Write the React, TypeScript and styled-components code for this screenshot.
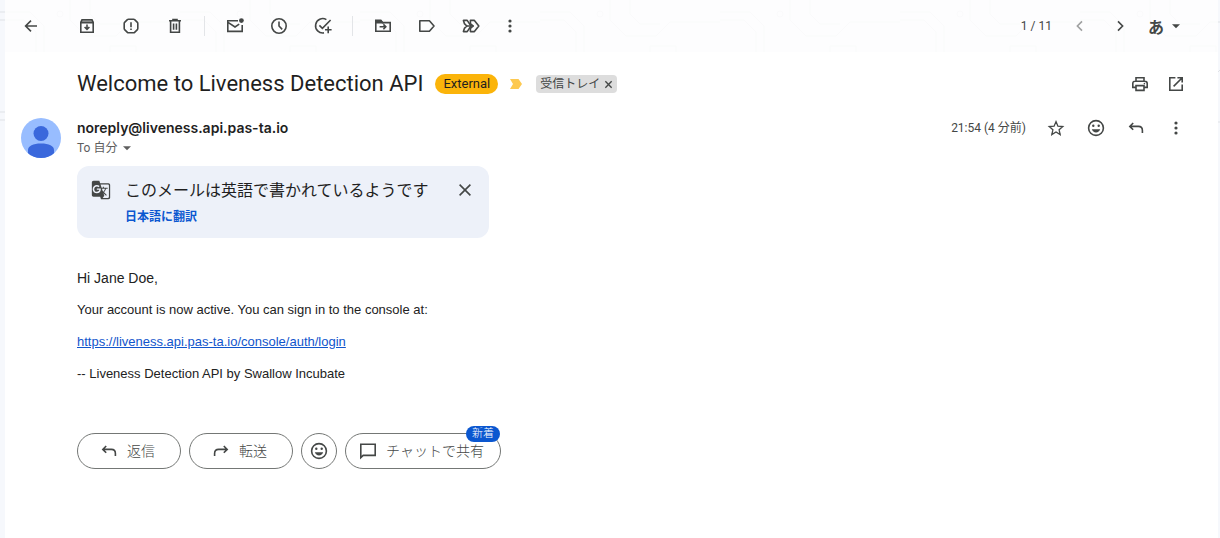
import React from "react";
import styled, { createGlobalStyle } from "styled-components";
import { MdGTranslate } from "react-icons/md";

const Global = createGlobalStyle`
  * { box-sizing: border-box; }
  body { margin: 0; background: #f6f8fc; font-family: Roboto, "Noto Sans CJK JP", sans-serif; color: #1f1f1f; }
  button { font: inherit; color: inherit; background: none; border: 0; padding: 0; margin: 0; cursor: pointer; }
`;

const paths = {
  back: <path d="M16 10H4.6M10 4.6L4.6 10l5.4 5.4" />,
  archive: (
    <>
      <path d="M3.8 6.6h12.4v9.6H3.8zM3.8 6.4l1.2-2.6h10l1.2 2.6" />
      <path d="M5 3.8h10l1 2.2H4z" fill="currentColor" fillOpacity=".5" stroke="none" />
      <path d="M10 8.4v4.4M7.6 11l2.4 2.4 2.4-2.4" />
    </>
  ),
  spam: (
    <>
      <path d="M7.4 3.2h5.2q.6 0 1 .4l2.8 2.8q.4.4.4 1v5.2q0 .6-.4 1l-2.8 2.8q-.4.4-1 .4H7.4q-.6 0-1-.4l-2.8-2.8q-.4-.4-.4-1V7.4q0-.6.4-1l2.8-2.8q.4-.4 1-.4z" />
      <path d="M10 6.2v5M10 12.4v1.7" />
    </>
  ),
  trash: <path d="M4 4.8h12M8 4V3.6h4V4M5.6 5v11.2h8.8V5M8.6 7.4v6.4M11.4 7.4v6.4" />,
  unread: (
    <>
      <path d="M13 4.8H2.8v10.6h14.4V9M3 6.4l7 4.6 4.2-2.8" />
      <circle cx="16.4" cy="4.6" r="2.4" fill="currentColor" stroke="none" />
    </>
  ),
  clock: (
    <>
      <circle cx="10" cy="10" r="7.2" />
      <path d="M10 5.4V10l3.2 3.4" />
    </>
  ),
  task: <path d="M13.4 3.6A7.2 7.2 0 1 0 11 16.9M6.4 9.4l3 3L17.6 4M15.2 10.6v6.6M12 13.8h6.6" />,
  move: (
    <>
      <path d="M2.8 4.8h5l1.6 1.8h7.8v8.6H2.8z" />
      <path d="M2.8 4.4h5l1.8 2.4H2.8z" fill="currentColor" />
      <path d="M6.6 10.8h6M10.4 8.4l2.4 2.4-2.4 2.4" />
    </>
  ),
  label: <path d="M2.8 4.8h9.6l4.6 5.2-4.6 5.2H2.8z" strokeLinejoin="round" />,
  forwardAll: (
    <g strokeLinejoin="round" strokeLinecap="round">
      <path d="M2.400 4.400h3.800L10 10l-3.800 5.600H2.400l1-3.200 2.400-2.400-2.400-2.400z" />
      <path d="M9.400 7.600V4.400h4L17.800 10l-4.400 5.600h-4v-3.200l2.800-2.400z" />
      <path d="M6 10h6" />
    </g>
  ),
  more: (
    <g fill="currentColor" stroke="none">
      <circle cx="10" cy="5" r="1.6" />
      <circle cx="10" cy="10" r="1.6" />
      <circle cx="10" cy="15" r="1.6" />
    </g>
  ),
  prev: <path d="M12 5.4L7.4 10l4.6 4.6" />,
  next: <path d="M8 5.4l4.6 4.6L8 14.6" />,
  caret: <path d="M6 8.2h8L10 12.2z" fill="currentColor" stroke="none" />,
  print: (
    <>
      <path d="M6 7V3.8h8V7M6 13.4H2.8V9.6c0-1.6.8-2.4 2.4-2.4h9.6c1.6 0 2.4.8 2.4 2.4v3.8H14" />
      <path d="M6 11.6h8v4.8H6z" />
      <circle cx="14.4" cy="9.6" r=".8" fill="currentColor" stroke="none" />
    </>
  ),
  open: <path d="M9.4 3.8H3.8v12.4h12.4v-5.6M11.4 3.8h4.8v4.8M16 4l-8.4 8.4" />,
  star: <path d="M10 3.6l1.9 4.6 4.9.4-3.7 3.2 1.1 4.8L10 14l-4.2 2.6 1.1-4.8-3.7-3.2 4.9-.4z" strokeWidth="1.3" />,
  smile: (
    <>
      <circle cx="10" cy="10" r="7.4" />
      <g fill="currentColor" stroke="none">
        <circle cx="7.3" cy="7.8" r="1.2" />
        <circle cx="12.7" cy="7.8" r="1.2" />
        <path d="M5.8 11.2h8.4c-.6 2-2.2 3.2-4.2 3.2s-3.6-1.2-4.2-3.2z" />
      </g>
    </>
  ),
  reply: <path d="M7.2 5L3.8 8.400l3.400 3.400M4 8.400h8.400c2.600 0 4 1.400 4 4v2.600" />,
  forward: <path d="M12.800 5l3.400 3.400-3.400 3.400M16 8.400H7.600c-2.600 0-4 1.400-4 4v2.600" />,
  close: <path d="M4.6 4.6l10.8 10.8M15.4 4.6L4.6 15.4" />,
  remove: <path d="M3 3l14 14M17 3L3 17" strokeWidth="3" />,
  chat: <path d="M2.8 3.2h14.4v11.2H5.2l-2.4 2.2z" />,
};

const Svg = styled.svg`
  display: block;
  flex: none;
  fill: none;
  stroke: currentColor;
  stroke-width: 1.6;
`;

const Icon = ({ name, size = 20 }: { name: keyof typeof paths; size?: number }) => (
  <Svg width={size} height={size} viewBox="0 0 20 20" aria-hidden="true">
    {paths[name]}
  </Svg>
);

const Page = styled.div`
  position: relative;
  min-height: 100vh;
  padding: 0 2px 0 5px;
`;

const Backdrop = styled.svg`
  position: absolute;
  inset: 0;
  width: 100%;
  height: 130px;
`;

const Sheet = styled.main`
  position: relative;
  min-height: 100vh;
  background: rgba(254, 254, 254, 0.86);
`;

const Toolbar = styled.header`
  display: flex;
  align-items: center;
  height: 52px;
  padding: 0 32px 0 16px;
  color: #444746;
`;

const ToolGroup = styled.div`
  display: flex;
  gap: 24px;
  padding-right: 19px;
  & + & {
    padding-left: 20px;
    border-left: 1px solid #e3e5e8;
  }
  &:last-of-type {
    padding-right: 20px;
  }
`;

const BackSlot = styled.div`
  margin-right: 36px;
`;

const IconButton = styled.button<{ $faded?: boolean }>`
  display: flex;
  align-items: center;
  justify-content: center;
  opacity: ${(p) => (p.$faded ? 0.5 : 1)};
`;

const Pager = styled.div`
  display: flex;
  align-items: center;
  gap: 18px;
  margin-left: auto;
  font-size: 12px;
`;

const PageArrows = styled.nav`
  display: flex;
  gap: 20px;
`;

const InputTool = styled.button`
  display: flex;
  align-items: center;
  gap: 2px;
  font: 700 16px/20px "Noto Sans CJK JP", sans-serif;
`;

const Content = styled.div`
  background: #fff;
  padding: 16px 32px 0 16px;
  min-height: calc(100vh - 52px);
`;

const SubjectRow = styled.div`
  display: flex;
  align-items: center;
  height: 32px;
  padding-left: 56px;
`;

const Subject = styled.h1`
  margin: 0 12px 0 0;
  font-size: 22px;
  line-height: 28px;
  font-weight: 400;
`;

const External = styled.span`
  padding: 0 8px;
  border-radius: 10px;
  background: #fbb40a;
  font-size: 13px;
  line-height: 20px;
`;

const Marker = styled.svg`
  margin: 0 14px 0 12px;
`;

const Chip = styled.span`
  display: flex;
  align-items: center;
  gap: 4px;
  height: 18px;
  padding: 0 4px;
  border-radius: 4px;
  background: #ddd;
  color: #444746;
  font-size: 12px;
  line-height: 18px;
`;

const Actions = styled.div<{ $gap: number }>`
  display: flex;
  align-items: center;
  gap: ${(p) => p.$gap}px;
  margin-left: auto;
  color: #444746;
`;

const SenderRow = styled.div`
  display: flex;
  align-items: flex-start;
  gap: 16px;
  padding-top: 18px;
`;

const Avatar = styled.svg`
  flex: none;
`;

const SenderText = styled.div`
  flex: 1;
  min-width: 0;
`;

const SenderLine = styled.div`
  display: flex;
  align-items: center;
  height: 20px;
`;

const Sender = styled.strong`
  font: 600 14px/20px Inter, sans-serif;
`;

const Time = styled.span`
  font-size: 12px;
  line-height: 18px;
`;

const Recipient = styled.button`
  display: flex;
  align-items: center;
  font-size: 12px;
  line-height: 20px;
  color: #5e5e5e;
`;

const Indent = styled.div`
  padding-left: 56px;
`;

const Translate = styled.section`
  display: flex;
  align-items: flex-start;
  gap: 14px;
  width: 412px;
  max-width: 100%;
  height: 72px;
  margin-top: 8px;
  padding: 14px;
  border-radius: 12px;
  background: #edf1f9;
  color: #444746;
`;

const TranslateText = styled.div`
  flex: 1;
  padding-top: 1px;
  font-size: 16px;
  line-height: 20px;
  color: #1f1f1f;
`;

const TranslateLink = styled.a`
  display: block;
  margin-top: 6px;
  font-size: 12px;
  font-weight: 700;
  color: #0b57d0;
  text-decoration: none;
`;

const Body = styled.div`
  padding-top: 30px;
  font: 13px/20px "Liberation Sans", Arial, sans-serif;
  color: #222;
  p { margin: 0 0 12px; }
  a { color: #15c; }
`;

const Greeting = styled.p`
  font-size: 14px;
`;

const Replies = styled.div`
  display: flex;
  gap: 8px;
  padding-top: 37px;
`;

const Pill = styled.button<{ $width: number; $labelled?: boolean }>`
  position: relative;
  display: flex;
  align-items: center;
  justify-content: center;
  gap: 8px;
  width: ${(p) => p.$width}px;
  height: 36px;
  padding-right: ${(p) => (p.$labelled ? 4 : 0)}px;
  border: 1px solid #747775;
  border-radius: 18px;
  font-size: 14px;
  line-height: 18px;
  font-weight: 300;
  color: #444746;
`;

const PillLabel = styled.span`
  padding-bottom: 1px;
`;

const Badge = styled.span`
  position: absolute;
  top: -8px;
  right: 0;
  padding: 0 6px;
  border-radius: 8px;
  background: #0b57d0;
  color: #fff;
  font-size: 11px;
  line-height: 16px;
`;

const Tool = ({ name, label, faded }: { name: keyof typeof paths; label: string; faded?: boolean }) => (
  <IconButton aria-label={label} $faded={faded}>
    <Icon name={name} />
  </IconButton>
);

export default function App() {
  return (
    <Page>
      <Global />
      <Backdrop aria-hidden="true">
        <defs>
          <pattern id="circuit" width="180" height="100" patternUnits="userSpaceOnUse">
            <g fill="none" stroke="#dfe2e6">
              <path d="M0 12h30l14 14v26l12 12h40M0 20h24l12 12v30l12 12h30M70 0v20l16 16h30l14-14h50M90 0v14l10 10h20M180 60h-30l-16 16v24M180 70h-24l-12 12v18M60 100V88l12-8M110 46h26v24h-26z" />
              <circle cx="99" cy="64" r="3" />
              <circle cx="81" cy="74" r="3" />
              <circle cx="60" cy="14" r="3" />
            </g>
          </pattern>
        </defs>
        <rect width="100%" height="100%" fill="url(#circuit)" />
      </Backdrop>
      <Sheet>
        <Toolbar>
          <BackSlot>
            <Tool name="back" label="戻る" />
          </BackSlot>
          <ToolGroup>
            <Tool name="archive" label="アーカイブ" />
            <Tool name="spam" label="迷惑メール" />
            <Tool name="trash" label="削除" />
          </ToolGroup>
          <ToolGroup>
            <Tool name="unread" label="未読にする" />
            <Tool name="clock" label="スヌーズ" />
            <Tool name="task" label="タスクに追加" />
          </ToolGroup>
          <ToolGroup>
            <Tool name="move" label="移動" />
            <Tool name="label" label="ラベル" />
            <Tool name="forwardAll" label="転送" />
          </ToolGroup>
          <Tool name="more" label="その他" />
          <Pager>
            <span>1 / 11</span>
            <PageArrows>
              <Tool name="prev" label="前" faded />
              <Tool name="next" label="次" />
            </PageArrows>
            <InputTool>
              あ<Icon name="caret" />
            </InputTool>
          </Pager>
        </Toolbar>
        <Content>
          <SubjectRow>
            <Subject>Welcome to Liveness Detection API</Subject>
            <External>External</External>
            <Marker width="12" height="10" viewBox="0 0 12 10" aria-hidden="true">
              <path d="M0 0h8.5L12 5 8.5 10H0l3-5z" fill="#fdc951" />
            </Marker>
            <Chip>
              受信トレイ
              <IconButton aria-label="ラベルを削除">
                <Icon name="remove" size={9} />
              </IconButton>
            </Chip>
            <Actions $gap={16}>
              <Tool name="print" label="印刷" />
              <Tool name="open" label="新しいウィンドウ" />
            </Actions>
          </SubjectRow>
          <SenderRow>
            <Avatar width="40" height="40" viewBox="0 0 40 40" aria-hidden="true">
              <clipPath id="face">
                <circle cx="20" cy="20" r="20" />
              </clipPath>
              <g clipPath="url(#face)">
                <rect width="40" height="40" fill="#98bdff" />
                <circle cx="20" cy="15.5" r="7.5" fill="#3a68dc" />
                <path d="M7 40V32c0-4 5-6.5 13-6.5S33 28 33 32v8z" fill="#3a68dc" />
              </g>
            </Avatar>
            <SenderText>
              <SenderLine>
                <Sender>noreply@liveness.api.pas-ta.io</Sender>
                <Actions $gap={20}>
                  <Time>21:54 (4 分前)</Time>
                  <Tool name="star" label="スター" />
                  <Tool name="smile" label="リアクション" />
                  <Tool name="reply" label="返信" />
                  <Tool name="more" label="その他" />
                </Actions>
              </SenderLine>
              <Recipient>
                To 自分
                <Icon name="caret" />
              </Recipient>
            </SenderText>
          </SenderRow>
          <Indent>
            <Translate>
              <MdGTranslate size={20} />
              <TranslateText>
                このメールは英語で書かれているようです
                <TranslateLink href="#">日本語に翻訳</TranslateLink>
              </TranslateText>
              <Tool name="close" label="閉じる" />
            </Translate>
            <Body>
              <Greeting>Hi Jane Doe,</Greeting>
              <p>Your account is now active. You can sign in to the console at:</p>
              <p>
                <a href="#">https://liveness.api.pas-ta.io/console/auth/login</a>
              </p>
              <p>-- Liveness Detection API by Swallow Incubate</p>
            </Body>
            <Replies>
              <Pill $width={104} $labelled>
                <Icon name="reply" />
                <PillLabel>返信</PillLabel>
              </Pill>
              <Pill $width={104} $labelled>
                <Icon name="forward" />
                <PillLabel>転送</PillLabel>
              </Pill>
              <Pill $width={36} aria-label="リアクション">
                <Icon name="smile" />
              </Pill>
              <Pill $width={156} $labelled>
                <Icon name="chat" />
                <PillLabel>チャットで共有</PillLabel>
                <Badge>新着</Badge>
              </Pill>
            </Replies>
          </Indent>
        </Content>
      </Sheet>
    </Page>
  );
}
